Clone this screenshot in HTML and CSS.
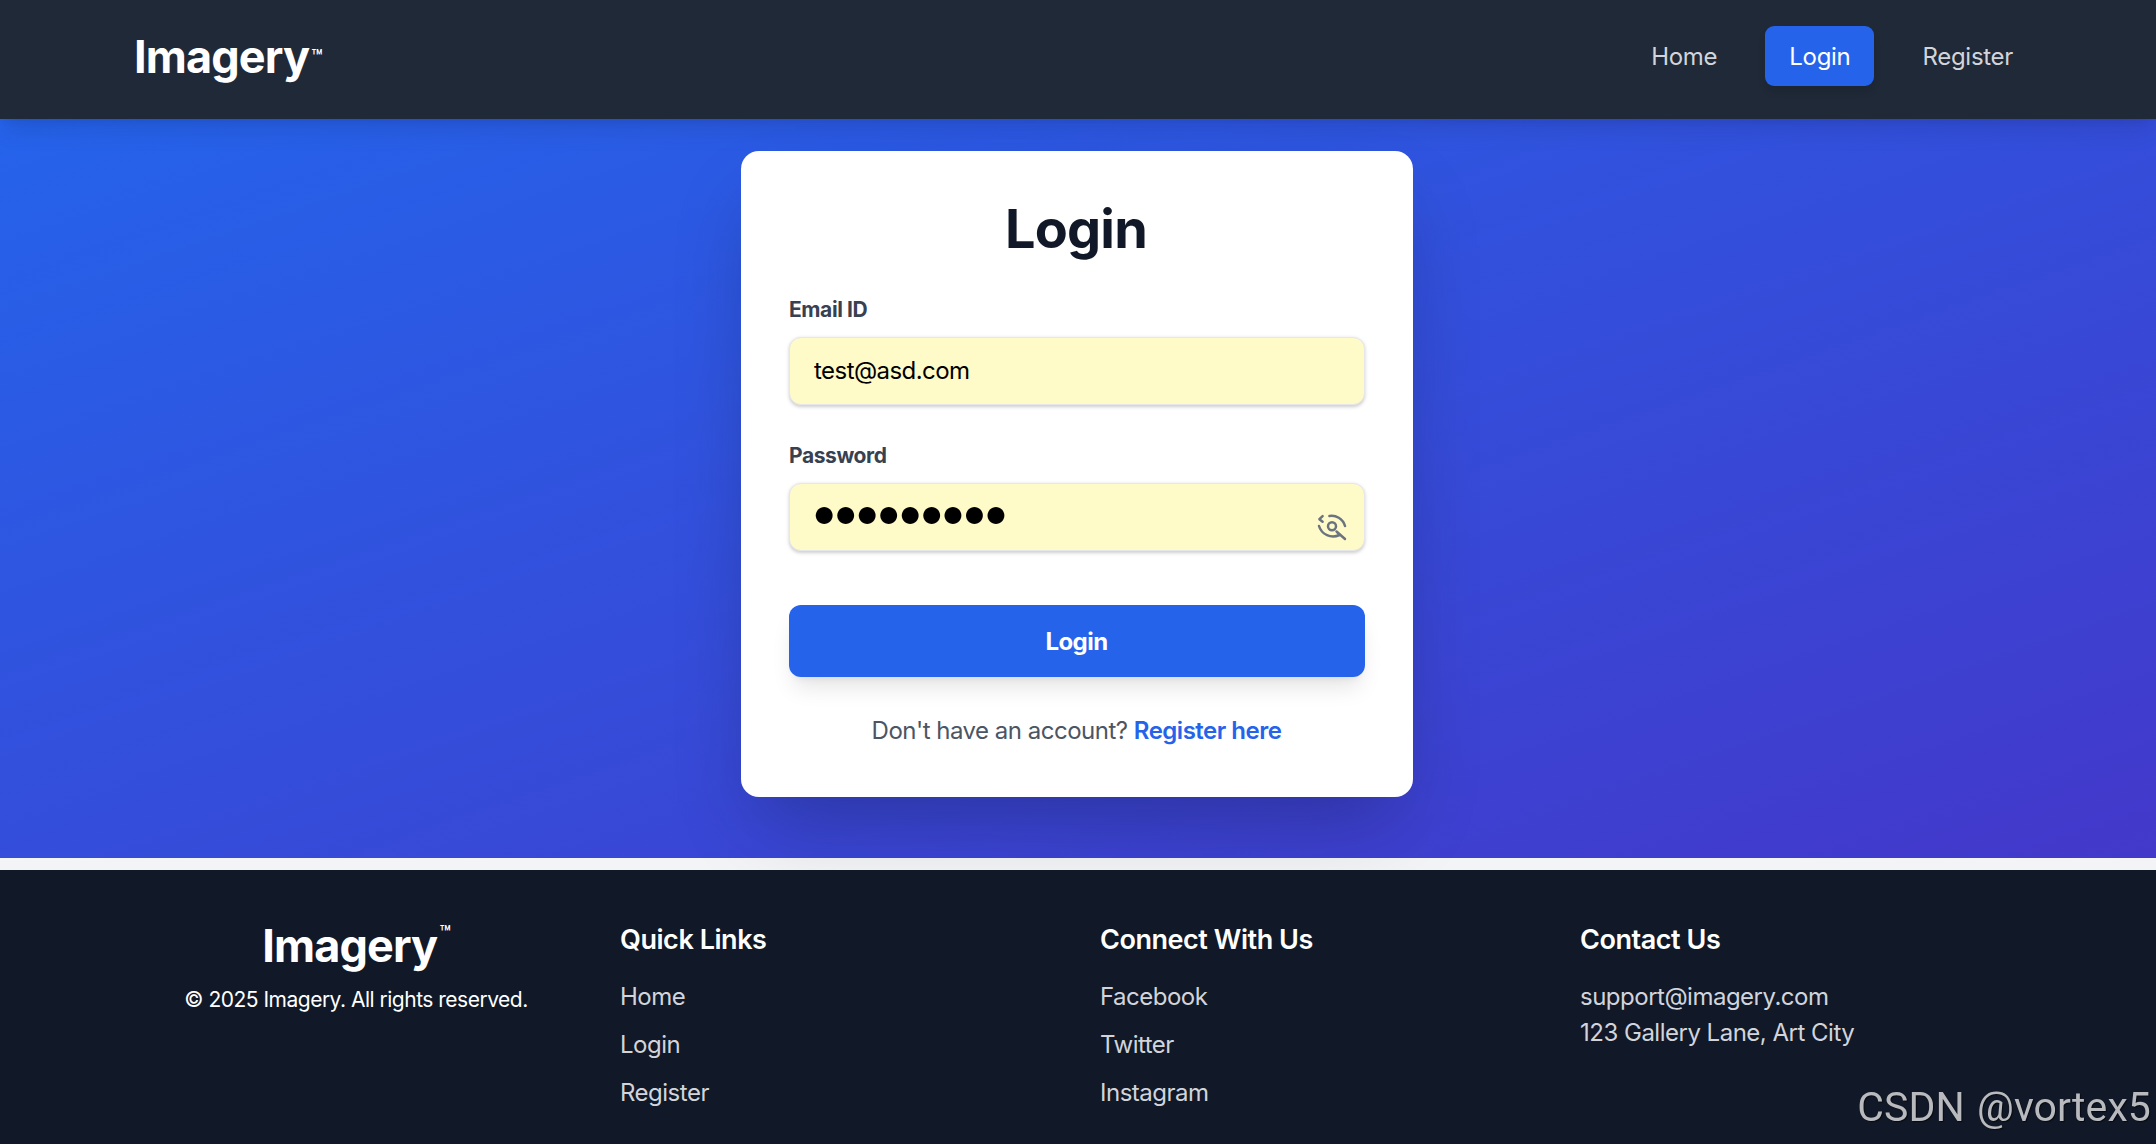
FILE: index.html
```
<!DOCTYPE html>
<html lang="en">
<head>
    <meta charset="UTF-8">
    <meta name="viewport" content="width=device-width, initial-scale=1.0">
    <title>Login - Imagery</title>
    <link rel="stylesheet" href="styles.css">
</head>
<body>
    <header class="site-header">
        <nav class="navbar">
            <a href="#" class="logo">Imagery<span class="tm">™</span></a>
            <div class="nav-links">
                <a href="#">Home</a>
                <a href="#" class="active">Login</a>
                <a href="#">Register</a>
            </div>
        </nav>
    </header>

    <main class="hero">
        <div class="login-card">
            <h1>Login</h1>
            <form>
                <div class="form-group">
                    <label for="email">Email ID</label>
                    <input type="email" id="email" value="test@asd.com">
                </div>
                <div class="form-group password-group">
                    <label for="password">Password</label>
                    <input type="password" id="password" value="imagery25">
                    <button type="button" class="toggle-password" aria-label="Show password">
                        <svg viewBox="0 0 30 30" fill="none" stroke="currentColor" stroke-width="2.5" stroke-linecap="round" stroke-linejoin="round">
                            <path d="M5.6 3.2L2.4 6.2L5.6 8.8"/>
                            <path d="M12.4 3C18.5 1.8 26 5.5 28 13"/>
                            <path d="M2 13C4.5 21.5 14 26 22.5 22L19.5 18.5L28 26"/>
                            <circle cx="15" cy="13.2" r="4"/>
                        </svg>
                    </button>
                </div>
                <button type="button" class="login-button">Login</button>
            </form>
            <p class="register-text">Don't have an account? <a href="#">Register here</a></p>
        </div>
    </main>

    <footer class="site-footer">
        <div class="footer-grid">
            <div class="footer-brand">
                <div class="logo">Imagery<sup>™</sup></div>
                <p>© 2025 Imagery. All rights reserved.</p>
            </div>
            <div>
                <h3>Quick Links</h3>
                <ul>
                    <li><a href="#">Home</a></li>
                    <li><a href="#">Login</a></li>
                    <li><a href="#">Register</a></li>
                </ul>
            </div>
            <div>
                <h3>Connect With Us</h3>
                <ul>
                    <li><a href="#">Facebook</a></li>
                    <li><a href="#">Twitter</a></li>
                    <li><a href="#">Instagram</a></li>
                </ul>
            </div>
            <div>
                <h3>Contact Us</h3>
                <p class="contact">support@imagery.com</p>
                <p class="contact">123 Gallery Lane, Art City</p>
            </div>
        </div>
    </footer>
    <div class="watermark">CSDN @vortex5</div>
</body>
</html>
```
FILE: styles.css
```
* {
    box-sizing: border-box;
    margin: 0;
    padding: 0;
}
body {
    font-family: Inter, sans-serif;
    font-size: 24px;
    line-height: 36px;
    letter-spacing: -0.5px;
    height: 1144px;
    overflow: hidden;
    background-color: #f3f4f6;
}
a {
    color: inherit;
    text-decoration: none;
}
.site-header {
    position: relative;
    z-index: 1;
    height: 119px;
    padding: 26px 119px 0 134px;
    background-color: #1f2937;
    box-shadow: 0 15px 22.5px -4.5px rgba(0,0,0,0.1), 0 6px 9px -6px rgba(0,0,0,0.1);
}
.navbar {
    display: flex;
    justify-content: space-between;
}
.logo {
    color: white;
    font-size: 45px;
    font-weight: 700;
    line-height: 54px;
    letter-spacing: -0.85px;
}
.navbar .logo {
    margin-top: 4px;
}
.tm {
    margin-left: 2px;
    font-size: 18px;
    font-weight: 600;
    vertical-align: 10px;
    line-height: 0;
}
.nav-links {
    display: flex;
    gap: 24px;
    color: #d1d5db;
    letter-spacing: -0.3px;
}
.nav-links a {
    height: 60px;
    padding: 13px 24px 11px;
    border-radius: 9px;
}
.nav-links .active {
    background-color: #2563eb;
    color: white;
    box-shadow: 0 6px 9px -1.5px rgba(0,0,0,0.1);
}
.hero {
    height: 739px;
    padding-top: 32px;
    background: linear-gradient(to bottom right, #2563eb, #4338ca);
}
.login-card {
    width: 672px;
    height: 646px;
    margin: 0 auto;
    padding: 48px;
    position: relative;
    right: 1px;
    border-radius: 18px;
    background-color: white;
    box-shadow: 0 37.5px 75px -18px rgba(0,0,0,0.25);
}
.login-card h1 {
    margin-bottom: 36px;
    padding-right: 2px;
    color: #111827;
    font-size: 54px;
    font-weight: 700;
    line-height: 60px;
    letter-spacing: -0.8px;
    text-align: center;
}
.form-group {
    margin-bottom: 36px;
}
.form-group label {
    display: block;
    margin-bottom: 12px;
    color: #374151;
    font-size: 21px;
    font-weight: 700;
    line-height: 30px;
    letter-spacing: -0.4px;
}
.form-group input {
    display: block;
    width: 100%;
    height: 68px;
    padding: 0 24px 1px;
    border: 1px solid #e5e7eb;
    border-radius: 12px;
    background-color: #fffbc8;
    box-shadow: 0 1.5px 4.5px rgba(0,0,0,0.1), 0 1.5px 3px rgba(0,0,0,0.1);
    color: black;
    font: inherit;
    letter-spacing: -0.55px;
}
.form-group input[type="password"] {
    padding: 0 18px 12px 19px;
    font-size: 54px;
    letter-spacing: -8.9px;
}
.password-group {
    position: relative;
    margin-bottom: 54px;
}
.toggle-password {
    position: absolute;
    right: 18px;
    bottom: 8px;
    width: 30px;
    height: 30px;
    border: none;
    background: none;
    color: #6b7280;
}
.toggle-password svg {
    display: block;
}
.login-button {
    display: block;
    width: 100%;
    height: 72px;
    padding: 1px 1px 0 0;
    border: none;
    border-radius: 12px;
    background-color: #2563eb;
    box-shadow: 0 15px 22.5px -4.5px rgba(0,0,0,0.1), 0 6px 9px -6px rgba(0,0,0,0.1);
    color: white;
    font: inherit;
    font-weight: 700;
    letter-spacing: -0.55px;
}
.register-text {
    margin-top: 36px;
    padding-right: 1px;
    color: #4b5563;
    text-align: center;
}
.register-text a {
    color: #2563eb;
    font-weight: 600;
}
.site-footer {
    position: relative;
    z-index: 1;
    height: 274px;
    margin-top: 12px;
    padding: 49px 144px 0 140px;
    background-color: #111827;
    color: #d1d5db;
}
.footer-grid {
    display: grid;
    grid-template-columns: repeat(4, 1fr);
    gap: 48px;
}
.footer-brand {
    color: white;
    text-align: center;
}
.footer-brand sup {
    margin-left: 2px;
    font-size: 18px;
    font-weight: 600;
    line-height: 0;
    vertical-align: 23px;
}
.footer-brand p {
    margin-top: 12px;
    font-size: 21px;
    line-height: 30px;
}
.site-footer h3 {
    margin-bottom: 18px;
    color: white;
    font-size: 27px;
    font-weight: 600;
    line-height: 42px;
    letter-spacing: -0.45px;
}
.site-footer ul {
    list-style: none;
}
.site-footer li {
    margin-bottom: 12px;
}
.watermark {
    position: fixed;
    z-index: 2;
    right: 5px;
    bottom: 12px;
    color: #b8babe;
    font-family: Roboto, sans-serif;
    font-size: 41px;
    line-height: 50px;
    letter-spacing: 0.1px;
    word-spacing: 2px;
    text-shadow: 1px 1px 1px rgba(0,0,0,0.6);
}
```
